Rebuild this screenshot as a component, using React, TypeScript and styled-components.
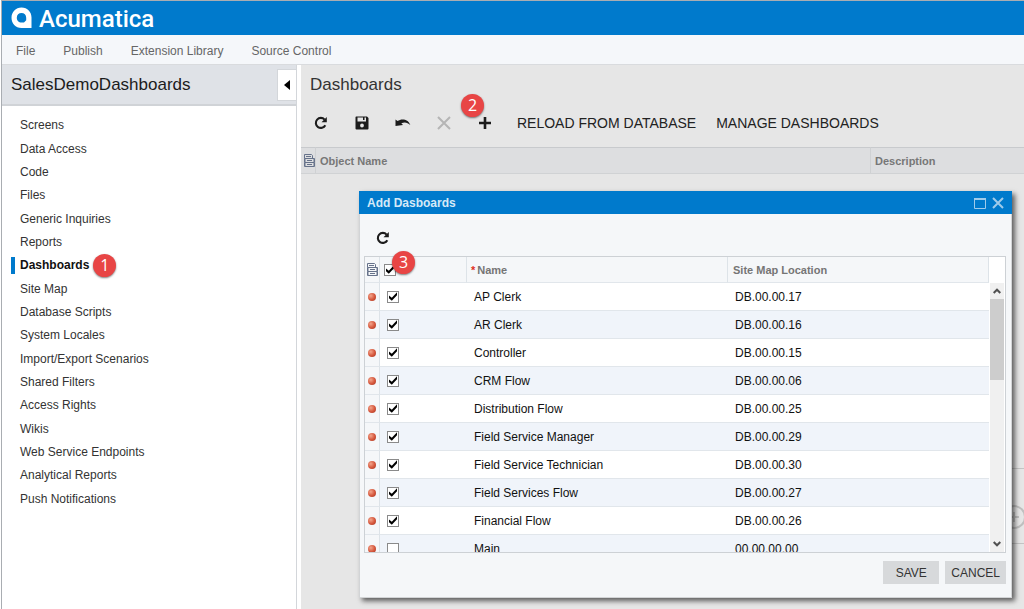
import React, { useState } from "react";
import styled, { createGlobalStyle, css } from "styled-components";

const GlobalStyle = createGlobalStyle`
  *, *::before, *::after { box-sizing: border-box; }
  body {
    margin: 0;
    background: #fff;
    color: #1c1c1c;
    font-family: "Liberation Sans", Arial, sans-serif;
    font-size: 12px;
  }
  button, input { font: inherit; margin: 0; }
`;

const Page = styled.div`
  display: flex;
  flex-direction: column;
  min-height: 100vh;
  margin-left: 1px;
  border-top: 1px solid #a9adb2;
  border-left: 1px solid #a9adb2;
`;

const BrandBar = styled.header`
  display: flex;
  align-items: center;
  gap: 7px;
  height: 34px;
  padding: 0 9px;
  background: #007acc;
  color: #fff;
`;

const BrandName = styled.span`
  padding-top: 2px;
  font-family: Roboto, sans-serif;
  font-size: 24px;
  font-weight: 500;
  line-height: 32px;
`;

const MenuBar = styled.nav`
  display: flex;
  gap: 28px;
  height: 30px;
  padding: 0 14px;
  background: #f5f7fa;
  border-bottom: 1px solid #d9dbde;
`;

const MenuLink = styled.a`
  color: #666;
  font-size: 12px;
  line-height: 32px;
  text-decoration: none;
`;

const Body = styled.div`
  display: flex;
  flex: 1;
`;

const Sidebar = styled.aside`
  flex: none;
  width: 295px;
  background: #fff;
  border-right: 1px solid #d3d6da;
`;

const SidebarHeader = styled.div`
  display: flex;
  align-items: center;
  justify-content: space-between;
  height: 41px;
  padding-left: 9px;
  background: #dfe2e7;
  border-bottom: 2px solid #d0d3d7;
`;

const Heading = styled.h1`
  margin: 0;
  font-size: 17px;
  font-weight: 400;
  line-height: 40px;
`;

const CollapseButton = styled.button`
  display: flex;
  align-items: center;
  justify-content: center;
  width: 19px;
  height: 32px;
  padding: 0;
  background: #fff;
  border: 1px solid #d3d6da;
  border-right: 0;
`;

const NavList = styled.ul`
  display: grid;
  grid-auto-rows: 1fr;
  min-height: 397px;
  margin: 8px 0 0;
  padding: 0 0 0 9px;
  list-style: none;
`;

const NavItem = styled.li`
  display: flex;
  align-items: center;
  gap: 4px;
`;

const NavLink = styled.a<{ $active?: boolean }>`
  padding-left: 5px;
  border-left: 4px solid ${(p) => (p.$active ? "#007acc" : "transparent")};
  color: ${(p) => (p.$active ? "#111" : "#333")};
  font-size: 12px;
  font-weight: ${(p) => (p.$active ? 700 : 400)};
  line-height: 17px;
  text-decoration: none;
`;

const Callout = styled.span<{ $over?: "button" | "checkbox" }>`
  display: block;
  width: 23px;
  height: 23px;
  border-radius: 50%;
  background: #e84545;
  box-shadow: 0 1px 2px rgba(0, 0, 0, 0.5);
  color: #fff;
  font-family: "Open Sans", sans-serif;
  font-size: 16px;
  font-weight: 400;
  line-height: 23px;
  text-align: center;
  ${(p) =>
    p.$over &&
    css`
      position: absolute;
      z-index: 2;
      left: ${p.$over === "button" ? "-7px" : "8px"};
      bottom: ${p.$over === "button" ? "20px" : "2px"};
    `}
`;

const Main = styled.main`
  flex: 1;
  min-width: 0;
  margin-left: 4px;
  background: #e6e6e6;
`;

const MainHeading = styled(Heading)`
  padding-left: 9px;
  color: #333;
`;

const Toolbar = styled.div`
  display: flex;
  align-items: center;
  height: 42px;
  padding: 0 0 6px 3px;
`;

const IconButton = styled.button`
  display: flex;
  align-items: center;
  justify-content: center;
  position: relative;
  flex: none;
  width: 34px;
  height: 28px;
  padding: 0;
  background: none;
  border: 0;
  color: #1c1c1c;
  &:disabled { color: #b5b5b5; }
`;

const MainTools = styled.div`
  display: flex;
  gap: 7px;
  margin-right: 15px;
`;

const TextButton = styled.button`
  margin-right: 20px;
  padding: 0;
  background: none;
  border: 0;
  color: #222;
  font-size: 14px;
  white-space: nowrap;
`;

const ObjectTable = styled.table`
  width: 100%;
  border-collapse: separate;
  border-spacing: 0;
  table-layout: fixed;
  th {
    height: 27px;
    padding: 0 4px;
    background: #dddee0;
    border-top: 1px solid #c8cacd;
    border-bottom: 1px solid #d0d2d4;
    border-right: 1px solid #cfd1d3;
    color: #777;
    font-size: 11px;
    font-weight: 700;
    text-align: left;
  }
  th:first-child { width: 15px; padding: 0 0 0 3px; }
  th:last-child { width: 153px; border-right: 0; }
  svg { display: block; }
`;

const Workspace = styled.div`
  position: relative;
`;

const Dialog = styled.section`
  position: absolute;
  top: 17px;
  left: 58px;
  right: 12px;
  background: #f5f7f9;
  border: 1px solid #d2d4d6;
  border-top: 0;
  box-shadow: 3px 3px 5px rgba(0, 0, 0, 0.6);
`;

const DialogTitleBar = styled.div`
  display: flex;
  align-items: center;
  gap: 6px;
  height: 23px;
  margin: 0 -1px;
  padding: 0 8px;
  background: #007acc;
  color: #d5e9f7;
`;

const DialogTitle = styled.h2`
  flex: 1;
  margin: 0;
  font-size: 12px;
  font-weight: 700;
`;

const WindowButton = styled.button`
  display: block;
  width: 12px;
  height: 12px;
  padding: 0;
  background: none;
  border: 0;
  color: #9fcbea;
  svg { display: block; }
`;

const DialogTools = styled.div`
  display: flex;
  align-items: center;
  height: 42px;
  padding: 5px 0 0 6px;
`;

const GridFrame = styled.div`
  display: flex;
  height: 297px;
  margin: 0 5px 0 4px;
  background: #fff;
  border: 1px solid #cdd1d5;
`;

/* Cuts the rows at the bottom of the frame but leaves room above the header. */
const GridClip = styled.div`
  flex: 1;
  min-width: 0;
  clip-path: inset(-24px 0 0 0);
`;

const Grid = styled.table`
  width: 100%;
  border-collapse: separate;
  border-spacing: 0;
  table-layout: fixed;
  th, td {
    border-bottom: 1px solid #e1e6eb;
    text-align: left;
  }
  th {
    height: 26px;
    padding: 0 5px;
    background: #f5f7f9;
    border-right: 1px solid #dde3e8;
    color: #757575;
    font-size: 11px;
    font-weight: 700;
  }
  th:nth-child(1) { width: 15px; padding: 0 0 0 2px; }
  th:nth-child(2) { width: 87px; padding: 0 4px; }
  th:nth-child(3) { padding: 0 4px; }
  td {
    height: 28px;
    padding: 0 7px;
    color: #111;
    font-size: 12px;
  }
  td:first-child {
    padding: 0 0 0 3px;
    background: #f5f7f9;
    border-right: 1px solid #dde3e8;
  }
  tbody tr:nth-child(even) td:not(:first-child) { background: #f0f4fa; }
  svg, input { display: block; }
`;

const CheckAnchor = styled.div`
  position: relative;
  width: 12px;
`;

const Required = styled.span`
  margin-right: 2px;
  color: #e0301e;
`;

const Checkbox = styled.input`
  appearance: none;
  width: 12px;
  height: 12px;
  background: #fff;
  border: 1px solid #8a8a8a;
  &:checked::before {
    content: "";
    display: block;
    width: 10px;
    height: 10px;
    background: #000;
    clip-path: polygon(10% 40%, 38% 62%, 90% 8%, 90% 38%, 38% 92%, 10% 68%);
  }
`;

const StatusDot = styled.span`
  display: block;
  width: 8px;
  height: 8px;
  border-radius: 50%;
  background: radial-gradient(circle at 35% 35%, #f3a58c, #d4553a 55%, #a33a26);
`;

const ScrollColumn = styled.div`
  display: flex;
  flex-direction: column;
  flex: none;
  width: 16px;
  padding-top: 26px;
`;

const ScrollTrack = styled.div`
  display: flex;
  flex-direction: column;
  flex: 1;
  margin: 0 1px;
  background: #f0f0f0;
`;

const ScrollButton = styled.button`
  display: flex;
  align-items: center;
  justify-content: center;
  height: 16px;
  padding: 0;
  background: none;
  border: 0;
  color: #505050;
`;

const ScrollThumb = styled.div`
  height: 81px;
  margin-bottom: auto;
  background: #cdcdcd;
`;

const DialogFooter = styled.div`
  display: flex;
  justify-content: flex-end;
  gap: 6px;
  padding: 8px 5px 13px;
`;

const ActionButton = styled.button`
  height: 23px;
  padding: 0 6px;
  min-width: 56px;
  background: #d7d9db;
  border: 0;
  color: #333;
  font-size: 12px;
`;

const BackgroundPager = styled.div`
  position: absolute;
  top: 294px;
  right: 0;
  width: 24px;
  height: 76px;
  border: 1px solid #c4c4c4;
  border-width: 1px 0;
  color: #c0c0c0;
  overflow: hidden;
`;

const RefreshIcon = () => (
  <svg width="14" height="14" viewBox="0 0 14 14" fill="none" aria-hidden="true">
    <path d="M11.3 9.2A5 5 0 1 1 10.6 3.6" stroke="currentColor" strokeWidth="2.1" />
    <path d="M12.8 1v5.3H7.5z" fill="currentColor" />
  </svg>
);

const SaveIcon = () => (
  <svg width="14" height="14" viewBox="0 0 14 14" aria-hidden="true">
    <path
      fill="currentColor"
      fillRule="evenodd"
      d="M1 0.5h11L13.5 2v10.5a1 1 0 0 1-1 1h-11a1 1 0 0 1-1-1v-11a1 1 0 0 1 .5-1zM2.5 1.5v4h8.5v-4h-1.500v2.500h-1.500v-2.500zM7 7.600a1.900 1.900 0 1 0 0 3.800 1.900 1.900 0 0 0 0-3.800z"
    />
  </svg>
);

const UndoIcon = () => (
  <svg width="16" height="14" viewBox="0 0 16 14" aria-hidden="true">
    <path
      fill="currentColor"
      d="M.5 3.500L2.500 5C6.500 2.300 13 2.600 15.300 9C12.500 6.300 9.500 5.800 6.300 7.300L8 9L.5 10z"
    />
  </svg>
);

const DeleteIcon = () => (
  <svg width="14" height="14" viewBox="0 0 14 14" aria-hidden="true">
    <path d="M1 1l12 12M13 1L1 13" stroke="currentColor" strokeWidth="2" />
  </svg>
);

const AddIcon = () => (
  <svg width="14" height="14" viewBox="0 0 14 14" aria-hidden="true">
    <path d="M7 1v12M1 7h12" stroke="currentColor" strokeWidth="2.600" />
  </svg>
);

const RowSettingsIcon = () => (
  <svg width="11" height="13" viewBox="0 0 11 13" fill="none" stroke="#66728a" aria-hidden="true">
    <path d="M.5 4.500v-4h7l1 1v3M.5 4.500h10v4H.5zM.5 8.500v4h10v-4M2 2.500h5M3 6.500h5M3 10.500h5" />
    <path d="M1.500 4v8M9.500 5v7" strokeOpacity=".5" />
  </svg>
);

const BrandMark = () => (
  <svg width="21" height="22" viewBox="0 0 21 22" aria-hidden="true">
    <path
      fill="#fff"
      fillRule="evenodd"
      d="M10.500 .5C16.500 .5 20.500 5 20.500 10.500V21H10.500C4.500 21 .5 16.500 .5 10.700S4.800 .5 10.500 .5zM10.500 6C7.700 6 5.800 8 5.800 10.700S7.700 15.500 10.500 15.500H13L15.200 13.300V10.700C15.200 8 13.300 6 10.500 6z"
    />
  </svg>
);

const navItems = [
  "Screens",
  "Data Access",
  "Code",
  "Files",
  "Generic Inquiries",
  "Reports",
  "Dashboards",
  "Site Map",
  "Database Scripts",
  "System Locales",
  "Import/Export Scenarios",
  "Shared Filters",
  "Access Rights",
  "Wikis",
  "Web Service Endpoints",
  "Analytical Reports",
  "Push Notifications",
];

const dashboards = [
  { name: "AP Clerk", location: "DB.00.00.17", selected: true },
  { name: "AR Clerk", location: "DB.00.00.16", selected: true },
  { name: "Controller", location: "DB.00.00.15", selected: true },
  { name: "CRM Flow", location: "DB.00.00.06", selected: true },
  { name: "Distribution Flow", location: "DB.00.00.25", selected: true },
  { name: "Field Service Manager", location: "DB.00.00.29", selected: true },
  { name: "Field Service Technician", location: "DB.00.00.30", selected: true },
  { name: "Field Services Flow", location: "DB.00.00.27", selected: true },
  { name: "Financial Flow", location: "DB.00.00.26", selected: true },
  { name: "Main", location: "00.00.00.00", selected: false },
];

function AddDashboardsDialog() {
  const [rows, setRows] = useState(dashboards);
  const [all, setAll] = useState(true);

  const toggleAll = () => {
    setRows(rows.map((row) => ({ ...row, selected: !all })));
    setAll(!all);
  };
  const toggleRow = (name: string) =>
    setRows(rows.map((row) => (row.name === name ? { ...row, selected: !row.selected } : row)));

  return (
    <Dialog role="dialog" aria-labelledby="dialog-title">
      <DialogTitleBar>
        <DialogTitle id="dialog-title">Add Dasboards</DialogTitle>
        <WindowButton type="button" aria-label="Maximize">
          <svg width="12" height="12" viewBox="0 0 12 12" fill="none" stroke="currentColor">
            <path d="M.5 1.500h11v10H.5z" />
            <path d="M0 2h12" strokeWidth="2" />
          </svg>
        </WindowButton>
        <WindowButton type="button" aria-label="Close">
          <svg width="12" height="12" viewBox="0 0 12 12" stroke="currentColor">
            <path d="M1 1l10 10M11 1L1 11" strokeWidth="2" />
          </svg>
        </WindowButton>
      </DialogTitleBar>
      <DialogTools>
        <IconButton type="button" aria-label="Refresh list">
          <RefreshIcon />
        </IconButton>
      </DialogTools>
      <GridFrame>
        <GridClip>
          <Grid>
            <thead>
              <tr>
                <th><RowSettingsIcon /></th>
                <th>
                  <CheckAnchor>
                    <Checkbox type="checkbox" aria-label="Select all" checked={all} onChange={toggleAll} />
                    <Callout $over="checkbox">3</Callout>
                  </CheckAnchor>
                </th>
                <th><Required>*</Required>Name</th>
                <th>Site Map Location</th>
              </tr>
            </thead>
            <tbody>
              {rows.map((row) => (
                <tr key={row.name}>
                  <td><StatusDot /></td>
                  <td>
                    <Checkbox
                      type="checkbox"
                      aria-label={`Select ${row.name}`}
                      checked={row.selected}
                      onChange={() => toggleRow(row.name)}
                    />
                  </td>
                  <td>{row.name}</td>
                  <td>{row.location}</td>
                </tr>
              ))}
            </tbody>
          </Grid>
        </GridClip>
        <ScrollColumn>
          <ScrollTrack>
            <ScrollButton type="button" aria-label="Scroll up">
              <svg width="8" height="6" viewBox="0 0 8 6" fill="none" stroke="currentColor" strokeWidth="2">
                <path d="M.7 5L4 1.700L7.300 5" />
              </svg>
            </ScrollButton>
            <ScrollThumb />
            <ScrollButton type="button" aria-label="Scroll down">
              <svg width="8" height="6" viewBox="0 0 8 6" fill="none" stroke="currentColor" strokeWidth="2">
                <path d="M.7 1L4 4.300L7.300 1" />
              </svg>
            </ScrollButton>
          </ScrollTrack>
        </ScrollColumn>
      </GridFrame>
      <DialogFooter>
        <ActionButton type="button">SAVE</ActionButton>
        <ActionButton type="button">CANCEL</ActionButton>
      </DialogFooter>
    </Dialog>
  );
}

export default function App() {
  return (
    <Page>
      <GlobalStyle />
      <BrandBar>
        <BrandMark />
        <BrandName>Acumatica</BrandName>
      </BrandBar>
      <MenuBar>
        <MenuLink href="#file">File</MenuLink>
        <MenuLink href="#publish">Publish</MenuLink>
        <MenuLink href="#extension-library">Extension Library</MenuLink>
        <MenuLink href="#source-control">Source Control</MenuLink>
      </MenuBar>
      <Body>
        <Sidebar>
          <SidebarHeader>
            <Heading>SalesDemoDashboards</Heading>
            <CollapseButton type="button" aria-label="Collapse sidebar">
              <svg width="6" height="10" viewBox="0 0 6 10" aria-hidden="true">
                <path d="M6 0v10L0 5z" fill="#000" />
              </svg>
            </CollapseButton>
          </SidebarHeader>
          <NavList>
            {navItems.map((item) => (
              <NavItem key={item}>
                <NavLink href="#" $active={item === "Dashboards"}>{item}</NavLink>
                {item === "Dashboards" && <Callout>1</Callout>}
              </NavItem>
            ))}
          </NavList>
        </Sidebar>
        <Main>
          <MainHeading as="h2">Dashboards</MainHeading>
          <Toolbar>
            <MainTools>
              <IconButton type="button" aria-label="Refresh"><RefreshIcon /></IconButton>
              <IconButton type="button" aria-label="Save"><SaveIcon /></IconButton>
              <IconButton type="button" aria-label="Undo"><UndoIcon /></IconButton>
              <IconButton type="button" aria-label="Delete" disabled><DeleteIcon /></IconButton>
              <IconButton type="button" aria-label="Add">
                <AddIcon />
                <Callout $over="button">2</Callout>
              </IconButton>
            </MainTools>
            <TextButton type="button">RELOAD FROM DATABASE</TextButton>
            <TextButton type="button">MANAGE DASHBOARDS</TextButton>
          </Toolbar>
          <ObjectTable>
            <thead>
              <tr>
                <th><RowSettingsIcon /></th>
                <th>Object Name</th>
                <th>Description</th>
              </tr>
            </thead>
          </ObjectTable>
          <Workspace>
            <BackgroundPager>
              <svg width="24" height="74" viewBox="0 0 24 74" fill="none" stroke="currentColor" strokeWidth="2" aria-hidden="true">
                <circle cx="14" cy="48" r="11" />
                <path d="M9 48h10M14 43v10" />
              </svg>
            </BackgroundPager>
            <AddDashboardsDialog />
          </Workspace>
        </Main>
      </Body>
    </Page>
  );
}
